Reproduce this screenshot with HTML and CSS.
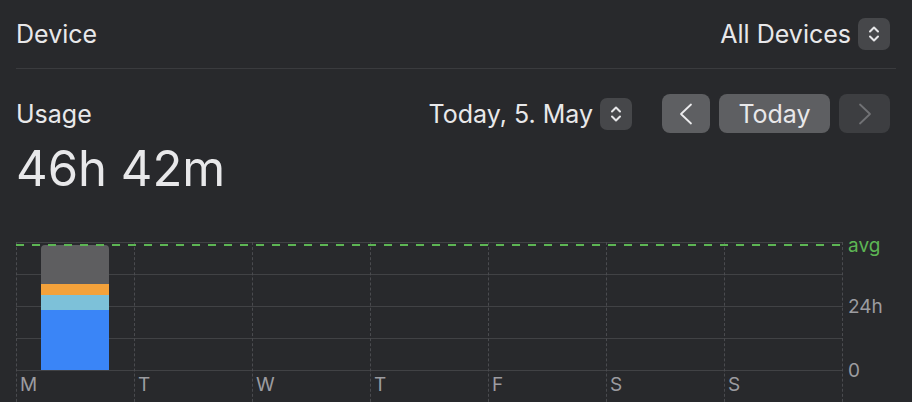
FILE: index.html
```html
<!DOCTYPE html>
<html>
<head>
<meta charset="utf-8">
<link rel="stylesheet" href="styles.css">
</head>
<body>
<div class="page">
  <div class="header">
    <span class="title">Device</span>
    <div class="picker">
      <span>All Devices</span>
      <span class="stepper">
        <svg width="12" height="20" viewBox="0 0 12 20"><path d="M2 7.5 L6 3.5 L10 7.5 M2 12.5 L6 16.5 L10 12.5" fill="none" stroke="#e6e6e8" stroke-width="2" stroke-linecap="round" stroke-linejoin="round"/></svg>
      </span>
    </div>
  </div>
  <div class="divider"></div>
  <div class="usage-row">
    <span class="title">Usage</span>
    <div class="controls">
      <div class="picker">
        <span>Today, 5. May</span>
        <span class="stepper">
          <svg width="12" height="20" viewBox="0 0 12 20"><path d="M2 7.5 L6 3.5 L10 7.5 M2 12.5 L6 16.5 L10 12.5" fill="none" stroke="#e6e6e8" stroke-width="2" stroke-linecap="round" stroke-linejoin="round"/></svg>
        </span>
      </div>
      <div class="nav">
        <span class="btn arrow">
          <svg width="14" height="22" viewBox="0 0 14 22"><path d="M12 1.5 L2 11 L12 20.5" fill="none" stroke="#ececee" stroke-width="1.8" stroke-linecap="round" stroke-linejoin="round"/></svg>
        </span>
        <span class="btn today">Today</span>
        <span class="btn arrow disabled">
          <svg width="14" height="22" viewBox="0 0 14 22"><path d="M2 1.5 L12 11 L2 20.5" fill="none" stroke="#717275" stroke-width="1.8" stroke-linecap="round" stroke-linejoin="round"/></svg>
        </span>
      </div>
    </div>
  </div>
  <div class="total">46h 42m</div>
  <div class="chart">
    <div class="days">
      <div class="avg-line"></div>
      <div class="day">
        <div class="slot">
          <div class="bar">
            <div class="seg gray" style="height:39px"></div>
            <div class="seg orange" style="height:11px"></div>
            <div class="seg sky" style="height:15px"></div>
            <div class="seg blue" style="height:60px"></div>
          </div>
        </div>
        <span class="day-label">M</span>
      </div>
      <div class="day"><div class="slot"></div><span class="day-label">T</span></div>
      <div class="day"><div class="slot"></div><span class="day-label">W</span></div>
      <div class="day"><div class="slot"></div><span class="day-label">T</span></div>
      <div class="day"><div class="slot"></div><span class="day-label">F</span></div>
      <div class="day"><div class="slot"></div><span class="day-label">S</span></div>
      <div class="day last"><div class="slot"></div><span class="day-label">S</span></div>
    </div>
    <div class="axis">
      <span class="axis-label avg">avg</span>
      <span class="axis-label mid">24h</span>
      <span class="axis-label zero">0</span>
    </div>
  </div>
</div>
</body>
</html>
```
FILE: styles.css
```css
html, body {
  margin: 0;
  padding: 0;
  background: #28292c;
  overflow: hidden;
}
body {
  font-family: "Inter", "Liberation Sans", sans-serif;
  color: #e8e8ea;
  width: 912px;
  height: 402px;
}
.page {
  padding: 0 22px 0 16px;
}
.header {
  height: 68px;
  display: flex;
  align-items: center;
  justify-content: space-between;
}
.title {
  font-size: 25px;
  line-height: 30px;
}
.picker {
  display: flex;
  align-items: center;
  gap: 7px;
  font-size: 25px;
  line-height: 30px;
}
.stepper {
  width: 32px;
  height: 32px;
  border-radius: 7px;
  background: #46474a;
  display: flex;
  align-items: center;
  justify-content: center;
}
.divider {
  height: 1px;
  background: #3a3b3e;
  margin-right: -6px;
}
.usage-row {
  margin-top: 25px;
  height: 39px;
  display: flex;
  align-items: center;
  justify-content: space-between;
}
.controls {
  display: flex;
  align-items: center;
  gap: 30px;
}
.nav {
  display: flex;
  gap: 9px;
}
.btn {
  height: 39px;
  border-radius: 8px;
  background: #5e5f62;
  display: flex;
  align-items: center;
  justify-content: center;
  font-size: 25px;
}
.arrow {
  width: 48px;
}
.today {
  width: 111px;
}
.disabled {
  background: #3d3e41;
  width: 51px;
}
.total {
  font-size: 49px;
  line-height: 52px;
  margin-top: 10px;
}
.chart {
  margin-top: 47px;
  display: flex;
}
.days {
  position: relative;
  display: flex;
  background-image: repeating-linear-gradient(to bottom, #414245 0 1px, transparent 1px 32px);
  background-size: 100% 129px;
  background-repeat: no-repeat;
}
.avg-line {
  position: absolute;
  left: 0;
  top: 2px;
  width: 826px;
  height: 2px;
  background-image: repeating-linear-gradient(to right, #5db654 0 8px, transparent 8px 16px);
  z-index: 2;
}
.day {
  width: 118px;
  border-left: 1px dashed #4a4b4f;
  box-sizing: border-box;
  display: flex;
  flex-direction: column;
  height: 170px;
}
.day.last {
  width: 119px;
  border-right: 1px dashed #4a4b4f;
}
.slot {
  height: 129px;
  display: flex;
  align-items: flex-end;
  justify-content: center;
}
.bar {
  width: 68px;
  margin-bottom: 1px;
  margin-left: -1px;
  border-radius: 4px 4px 0 0;
  overflow: hidden;
  display: flex;
  flex-direction: column;
}
.gray { background: #5e5e60; }
.orange { background: #f4a23b; }
.sky { background: #7dc1d9; }
.blue { background: #3a85f7; }
.day-label {
  font-size: 19px;
  line-height: 22px;
  padding-top: 3px;
  padding-left: 3px;
  color: #9c9ca0;
}
.axis {
  display: flex;
  flex-direction: column;
  padding-left: 5px;
}
.axis-label {
  font-size: 19px;
  line-height: 24px;
  color: #9c9ca0;
}
.avg {
  color: #5db654;
  margin-top: -8px;
}
.mid {
  margin-top: 37px;
}
.zero {
  margin-top: 40px;
}
```
